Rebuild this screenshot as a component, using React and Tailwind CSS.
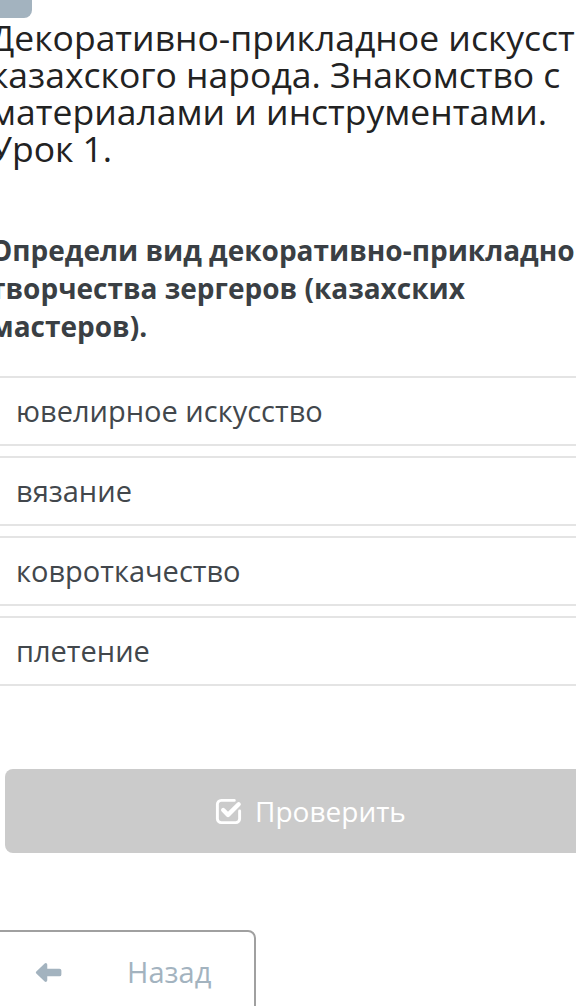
const options = ['ювелирное искусство', 'вязание', 'ковроткачество', 'плетение'];

function CheckSquareIcon() {
    return (
        <svg viewBox="0 0 30 30" className="size-[29px]" fill="none" stroke="currentColor" strokeLinecap="round" strokeLinejoin="round">
            <path d="M21 3.5H7.5a4 4 0 0 0-4 4v15a4 4 0 0 0 4 4h15a4 4 0 0 0 4-4v-8" strokeWidth="3" />
            <path d="M9.5 13.5l5 5 11-11" strokeWidth="4.5" />
        </svg>
    );
}

function ArrowLeftIcon() {
    return (
        <svg viewBox="0 0 28 22" className="w-[27px] h-[21px]" fill="currentColor">
            <path d="M1.2 12a1.4 1.4 0 0 1 0-2L10 1.6a1.6 1.6 0 0 1 2.7 1.2V7h12.8a2 2 0 0 1 2 2v4a2 2 0 0 1-2 2H12.7v4.2a1.6 1.6 0 0 1-2.7 1.2z" />
        </svg>
    );
}

export default function App() {
    return (
        <div className="w-[576px] h-[1006px] overflow-hidden bg-white font-['Open_Sans',sans-serif]">
            <div className="w-[32px] h-[18px] bg-[#a3b3bf] rounded-br-lg" />
            <h1 className="mt-[1px] -ml-[10px] text-[35.5px] leading-[37px] text-[#222] whitespace-nowrap font-normal">
                <span className="block">Декоративно-прикладное искусство</span>
                <span className="block">казахского народа. Знакомство с</span>
                <span className="block">материалами и инструментами.</span>
                <span className="block">Урок 1.</span>
            </h1>
            <p className="mt-[64px] -ml-[10px] text-[28px] leading-[38px] font-bold text-[#3a3f44] whitespace-nowrap">
                <span className="block">Определи вид декоративно-прикладного</span>
                <span className="block">творчества зергеров (казахских</span>
                <span className="block">мастеров).</span>
            </p>
            <div className="mt-[31px] flex flex-col gap-[10px] -ml-[10px] w-[620px]">
                {options.map((o) => (
                    <div key={o} className="h-[70px] border-y-2 border-[#e4e4e4] flex items-center pl-[26px] text-[29px] text-[#42474c]">
                        {o}
                    </div>
                ))}
            </div>
            <button className="mt-[83px] ml-[5px] w-[610px] h-[84px] rounded-lg bg-[#cbcbcb] text-white text-[28px] flex items-center justify-center gap-[12px]">
                <CheckSquareIcon />
                <span>Проверить</span>
            </button>
            <div className="mt-[77px] -ml-[10px] w-[266px] h-[90px] border-2 border-[#a0a0a0] rounded-tr-lg flex items-center pb-[6px] text-[#a3b3bf]">
                <span className="ml-[43px] flex"><ArrowLeftIcon /></span>
                <span className="ml-[65px] text-[29px]">Назад</span>
            </div>
        </div>
    );
}
